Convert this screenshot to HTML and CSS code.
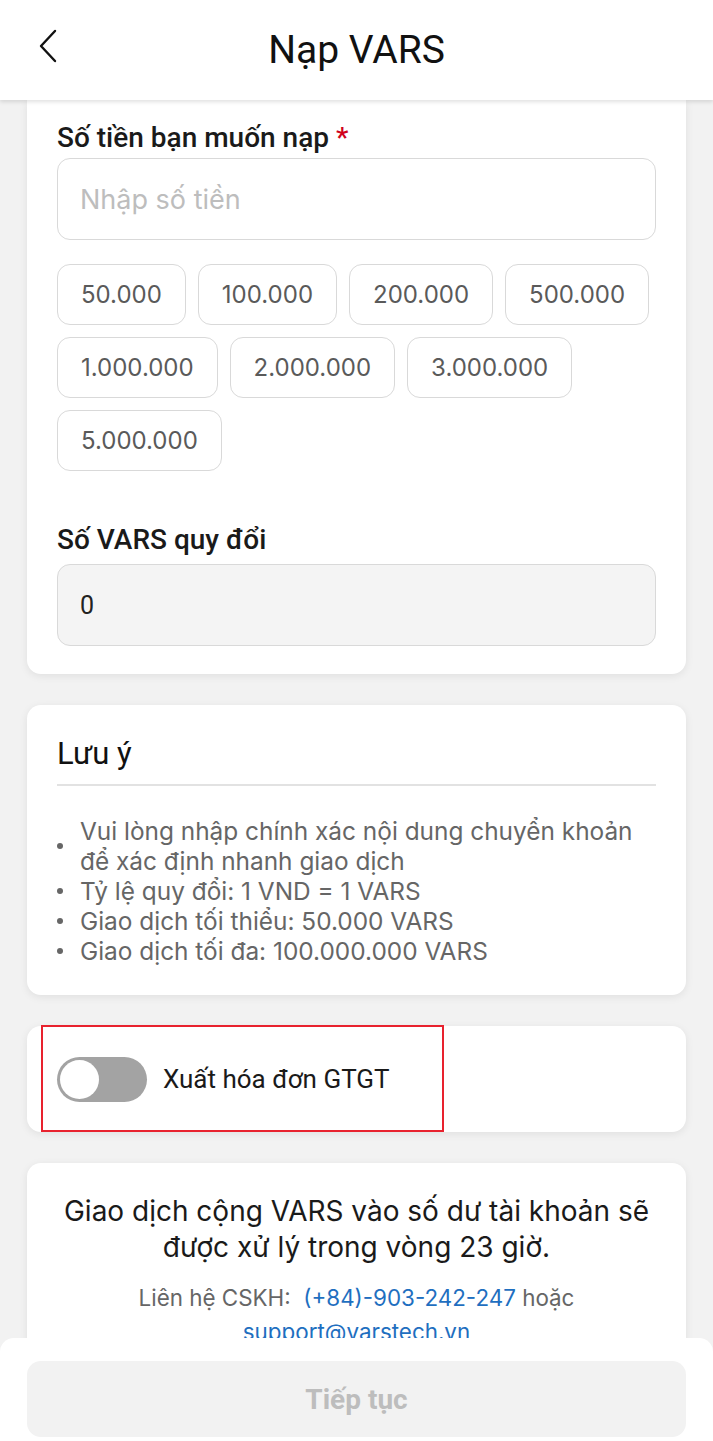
FILE: index.html
```html
<!DOCTYPE html>
<html lang="vi">
<head>
<meta charset="utf-8">
<title>Nạp VARS</title>
<link rel="stylesheet" href="styles.css">
</head>
<body>
<header class="topbar">
  <button class="back" aria-label="Quay lại">
    <svg width="20" height="34" viewBox="0 0 20 34"><path d="M17 2 L3 17 L17 32" fill="none" stroke="#111" stroke-width="2.4" stroke-linecap="round" stroke-linejoin="round"/></svg>
  </button>
  <h1 class="title">Nạp VARS</h1>
</header>

<main class="content">
  <section class="card card-first">
    <label class="field-label">Số tiền bạn muốn nạp <span class="req">*</span></label>
    <div class="input">Nhập số tiền</div>
    <div class="chips">
      <span class="chip">50.000</span>
      <span class="chip">100.000</span>
      <span class="chip">200.000</span>
      <span class="chip">500.000</span>
      <span class="chip">1.000.000</span>
      <span class="chip">2.000.000</span>
      <span class="chip">3.000.000</span>
      <span class="chip">5.000.000</span>
    </div>
    <label class="field-label second">Số VARS quy đổi</label>
    <div class="input readonly">0</div>
  </section>

  <section class="card note">
    <h2 class="note-title">Lưu ý</h2>
    <ul class="note-list">
      <li>Vui lòng nhập chính xác nội dung chuyển khoản để xác định nhanh giao dịch</li>
      <li>Tỷ lệ quy đổi: 1 VND = 1 VARS</li>
      <li>Giao dịch tối thiểu: 50.000 VARS</li>
      <li>Giao dịch tối đa: 100.000.000 VARS</li>
    </ul>
  </section>

  <section class="card invoice">
    <div class="highlight"></div>
    <span class="toggle"><span class="thumb"></span></span>
    <span class="invoice-text">Xuất hóa đơn GTGT</span>
  </section>

  <section class="card info">
    <p class="info-main">Giao dịch cộng VARS vào số dư tài khoản sẽ được xử lý trong vòng 23 giờ.</p>
    <p class="info-contact">Liên hệ CSKH:&nbsp; <a class="link">(+84)-903-242-247</a> hoặc<br><a class="link">support@varstech.vn</a></p>
  </section>
</main>

<footer class="bottombar">
  <button class="btn-next">Tiếp tục</button>
</footer>
</body>
</html>
```

FILE: styles.css
```css
* { box-sizing: border-box; }
html, body { margin: 0; padding: 0; }
body {
  background: #f2f2f2;
  font-family: Roboto, "Noto Sans", sans-serif;
  color: #1a1a1a;
  height: 1441px;
  overflow: hidden;
}
.topbar {
  position: relative;
  z-index: 2;
  height: 100px;
  background: #fff;
  box-shadow: 0 2px 4px rgba(0,0,0,0.12);
  display: flex;
  align-items: center;
  justify-content: center;
}
.back {
  position: absolute;
  left: 38px;
  top: 29px;
  border: 0;
  background: none;
  padding: 0;
  display: flex;
}
.title {
  margin: 0;
  font-weight: 400;
  font-size: 39px;
  color: #111;
}
.content {
  padding: 0 27px;
  display: flex;
  flex-direction: column;
  gap: 31px;
}
.card {
  background: #fff;
  border-radius: 14px;
  box-shadow: 0 2px 8px rgba(0,0,0,0.08);
  padding: 0 30px;
}
.card-first {
  border-radius: 0 0 14px 14px;
  padding-top: 20px;
  padding-bottom: 28px;
}
.field-label {
  display: block;
  font-size: 28px;
  font-weight: 500;
  line-height: 36px;
  color: #1a1a1a;
}
.field-label.second { margin-top: 51px; }
.req { color: #d0021b; }
.input {
  margin-top: 2px;
  height: 82px;
  border: 1px solid #d9d9d9;
  border-radius: 13px;
  display: flex;
  align-items: center;
  padding: 0 22px;
  font-family: Inter, Roboto, sans-serif;
  font-size: 27px;
  color: #bdbdbd;
}
.input.readonly {
  margin-top: 6px;
  background: #f4f4f4;
  color: #222;
  font-family: Roboto, sans-serif;
  font-size: 25px;
}
.chips {
  margin-top: 24px;
  display: flex;
  flex-wrap: wrap;
  gap: 12px 12px;
}
.chip {
  height: 61px;
  border: 1px solid #d9d9d9;
  border-radius: 13px;
  padding: 0 23px;
  display: inline-flex;
  align-items: center;
  font-family: Inter, Roboto, sans-serif;
  font-size: 24px;
  color: #5a5a5a;
}
.note { padding-top: 29px; padding-bottom: 29px; }
.note-title {
  margin: 0;
  font-weight: 400;
  font-size: 31px;
  line-height: 40px;
  color: #111;
  padding-bottom: 10px;
  border-bottom: 2px solid #e2e2e2;
}
.note-list {
  margin: 30px 0 0;
  padding: 0;
  list-style: none;
  font-family: Inter, Roboto, sans-serif;
  font-size: 24.4px;
  line-height: 30px;
  color: #666;
}
.note-list li {
  display: flex;
  align-items: center;
  gap: 17px;
}
.note-list li::before {
  content: "";
  flex: none;
  width: 6px;
  height: 6px;
  border-radius: 50%;
  background: #666;
}
.invoice {
  position: relative;
  height: 106px;
  display: flex;
  align-items: center;
  gap: 16px;
}
.highlight {
  position: absolute;
  left: 14px;
  top: -1px;
  width: 403px;
  height: 107px;
  border: 2px solid #e8222e;
  pointer-events: none;
}
.toggle {
  width: 90px;
  height: 45px;
  border-radius: 23px;
  background: #a3a3a3;
  display: inline-flex;
  align-items: center;
  padding: 0 3px;
}
.thumb {
  width: 39px;
  height: 39px;
  border-radius: 50%;
  background: #fff;
}
.invoice-text {
  font-size: 26px;
  color: #1a1a1a;
}
.info {
  padding: 30px 20px 40px;
  text-align: center;
}
.info-main {
  margin: 0;
  font-family: Inter, Roboto, sans-serif;
  font-size: 28px;
  line-height: 36px;
  color: #1a1a1a;
}
.info-contact {
  margin: 16px 0 0;
  font-family: Inter, Roboto, sans-serif;
  font-size: 22.4px;
  line-height: 34px;
  color: #666;
}
.link { color: #1f6fc0; }
.bottombar {
  position: fixed;
  left: 0;
  right: 0;
  bottom: 0;
  height: 103px;
  background: #fff;
  border-radius: 14px 14px 0 0;
  padding: 23px 27px 0;
}
.btn-next {
  width: 100%;
  height: 76px;
  border: 0;
  border-radius: 14px;
  background: #f2f2f2;
  font-family: Roboto, sans-serif;
  font-size: 28px;
  font-weight: 700;
  color: #bdbdbd;
}
```
